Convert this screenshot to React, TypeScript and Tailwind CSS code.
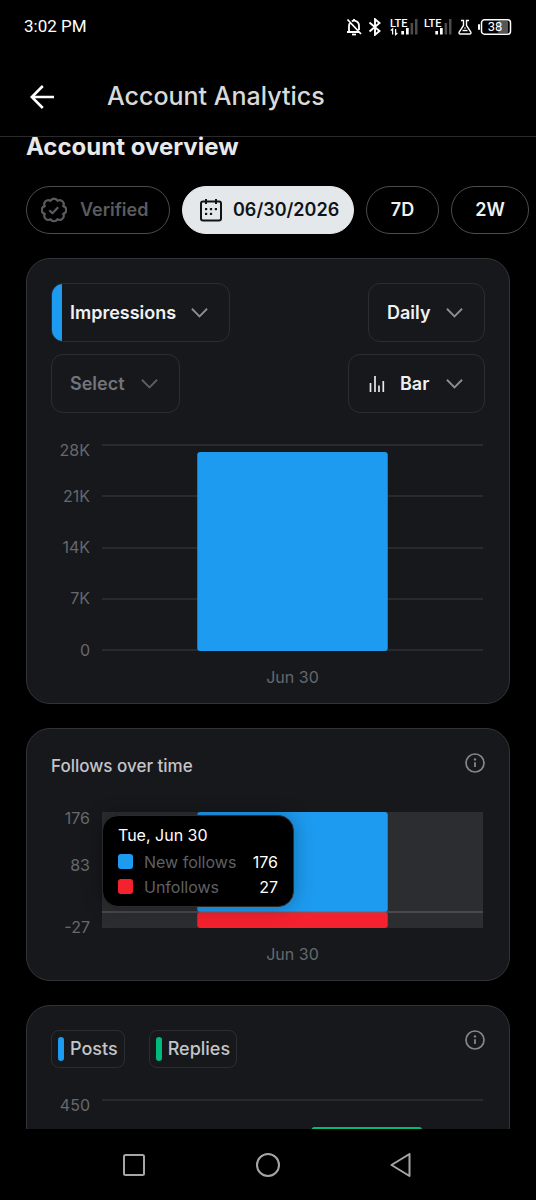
import type { ReactNode } from 'react';
import { clsx } from 'clsx';

const ChevronDown = () => (
  <svg className="pointer-events-none h-3 w-[17px] shrink-0" viewBox="0 0 18 12" fill="none" stroke="#8b8d92" strokeWidth="2">
    <path d="M1 1.5l8 8 8-8" />
  </svg>
);

const InfoIcon = () => (
  <svg className="h-5 w-5" viewBox="0 0 20 20" fill="none" stroke="#85868b" strokeWidth="1.7">
    <circle cx="10" cy="10" r="9" />
    <path d="M10 9.2v4.8" strokeWidth="1.8" />
    <circle cx="10" cy="6.4" r="1.2" fill="#85868b" stroke="none" />
  </svg>
);

const VerifiedIcon = () => (
  <svg className="h-[26px] w-[26px]" viewBox="0 0 26 26" fill="none" stroke="#5a5b5f" strokeWidth="2.2" strokeLinejoin="round">
    <path d="M13 1.6a4 4 0 0 1 3.5 2.2 4 4 0 0 1 5.7 5.3 4 4 0 0 1 0 7.8 4 4 0 0 1-5.7 5.3 4 4 0 0 1-7 0 4 4 0 0 1-5.7-5.3 4 4 0 0 1 0-7.8 4 4 0 0 1 5.7-5.3A4 4 0 0 1 13 1.6z" />
    <path d="M8.3 13.2l3.1 3.1 5.8-6" />
  </svg>
);

const CalendarIcon = () => (
  <svg className="h-6 w-6" viewBox="0 0 24 24" fill="none" stroke="#0f1419" strokeWidth="2">
    <rect x="2" y="3.5" width="20" height="19" rx="2" />
    <path d="M7 1v5M17 1v5" />
    <g fill="#0f1419" stroke="none">
      <rect x="6" y="10" width="2.2" height="2.2" />
      <rect x="10.9" y="10" width="2.2" height="2.2" />
      <rect x="15.8" y="10" width="2.2" height="2.2" />
      <rect x="6" y="14.8" width="2.2" height="2.2" />
      <rect x="10.9" y="14.8" width="2.2" height="2.2" />
    </g>
  </svg>
);

const BarsIcon = () => (
  <svg className="h-[18px] w-4 shrink-0" viewBox="0 0 16 18" stroke="#e7e9ea" strokeWidth="1.7">
    <path d="M1.5 8v9M6 1v16M10 10.5v6.5M14.3 6v11" />
  </svg>
);

const Signal = ({ data = false }: { data?: boolean }) => (
  <svg className="h-[18px] w-7" viewBox="0 0 28 18" fill="#fff">
    <text x="0" y="9" fontSize="11" fontWeight="500" fontFamily="Roboto, sans-serif">LTE</text>
    {data && <path d="M.8 12.6l1.8-1.6v5.5M5.6 11v5.5l1.8-1.6" fill="none" stroke="#fff" strokeWidth="1.3" />}
    <rect x="11.3" y="13" width="2.7" height="3.5" />
    <rect x="16" y="10" width="2.7" height="6.5" />
    <rect x="20.6" y="5" width="2.5" height="11.5" fill="#4c4c4c" />
    <rect x="25" y="1" width="2.5" height="15.5" fill="#4c4c4c" />
  </svg>
);

const StatusBar = () => (
  <div className="flex h-[54px] shrink-0 items-center justify-between px-6 text-white">
    <span className="font-[Roboto,sans-serif] text-[17px]">3:02 PM</span>
    <div className="flex items-center gap-[6px]">
      <svg className="h-[18px] w-4" viewBox="0 0 16 18" fill="none" stroke="#fff" strokeWidth="1.8">
        <path d="M3 14V8c0-1 .3-2 .8-2.8M5.8 3.2A5 5 0 0 1 13 8v4M1 14h12M1.5 1.5l13.5 14.5" />
        <path d="M8 1v2" strokeWidth="2" />
        <path d="M6 16.5h4" />
      </svg>
      <svg className="h-[18px] w-[14px]" viewBox="0 0 14 18" fill="none" stroke="#fff" strokeWidth="1.9">
        <path d="M1.5 4.5l10 8.500-4.500 3.800V1.2L11.500 5l-10 8.500" />
      </svg>
      <div className="flex gap-[6px] pl-[2px]">
        <Signal data />
        <Signal />
      </div>
      <svg className="h-[18px] w-[14px]" viewBox="0 0 14 18" fill="none" stroke="#fff" strokeWidth="1.4">
        <path d="M3 2.5h2.5v5L1.2 14c-.5 1 0 2 1 2h9.6c1 0 1.5-1 1-2L8.5 7.5v-5H11" />
        <path d="M4.5 12.5h5" />
        <circle cx="7" cy="10" r=".8" fill="#fff" stroke="none" />
      </svg>
      <svg className="h-[18px] w-[34px]" viewBox="0 0 34 18">
        <rect x="0" y="6" width="2" height="6" rx="1" fill="#fff" />
        <rect x="20" y="3" width="10" height="12" rx="1" fill="#565656" />
        <rect x="3.5" y="1.8" width="29" height="14.4" rx="3" fill="none" stroke="#fff" strokeWidth="1.5" />
        <text x="17" y="13.4" textAnchor="middle" fontSize="13" fontFamily="Roboto, sans-serif" fill="#fff">38</text>
      </svg>
    </div>
  </div>
);

const Card = ({ children }: { children: ReactNode }) => (
  <section className="rounded-3xl border border-[#323337] bg-[#17181c] px-6 pt-6 pb-3">{children}</section>
);

const Chip = ({ children, active, disabled, className }: { children: ReactNode; active?: boolean; disabled?: boolean; className?: string }) => (
  <button
    type="button"
    disabled={disabled}
    className={clsx(
      'flex h-12 shrink-0 items-center rounded-full border text-lg font-semibold',
      active ? 'border-[#e5e8ea] bg-[#e5e8ea] text-[#0f1419]' : 'border-[#4c4c4e] bg-black',
      disabled ? 'text-[#5a5b5f]' : !active && 'text-[#f0f1f2]',
      className
    )}
  >
    {children}
  </button>
);

type DropdownProps = { label: string; value: string; accent?: boolean; muted?: boolean; icon?: ReactNode; className: string };

const Dropdown = ({ label, value, accent, muted, icon, className }: DropdownProps) => (
  <label
    className={clsx(
      'flex h-[59px] items-center overflow-hidden rounded-xl border border-[#2c2d31] pr-[21px] text-lg font-semibold',
      muted ? 'text-[#72747a]' : 'text-[#f0f1f2]',
      className
    )}
  >
    {accent && <span className="mr-2 h-full w-[10px] shrink-0 bg-[#1d9bf0]" />}
    {icon}
    <select aria-label={label} defaultValue={value} className="min-w-0 flex-1 appearance-none bg-transparent outline-none">
      <option>{value}</option>
    </select>
    <span className={clsx('flex', muted && 'opacity-60')}>
      <ChevronDown />
    </span>
  </label>
);

type Tick = { label: string; y: number };

// Axis labels sit in their own fixed column, the plot takes the remaining width
const Axis = ({ ticks }: { ticks: Tick[] }) => (
  <svg className="h-full w-[39px] shrink-0 overflow-visible text-base" fill="#66686d">
    {ticks.map((t) => (
      <text key={t.label} x="39" y={t.y + 6} textAnchor="end">{t.label}</text>
    ))}
  </svg>
);

const impressionTicks: Tick[] = [
  { label: '28K', y: 6 },
  { label: '21K', y: 52 },
  { label: '14K', y: 103 },
  { label: '7K', y: 154 },
  { label: '0', y: 206 },
];

const followTicks: Tick[] = [
  { label: '176', y: 6 },
  { label: '83', y: 53 },
  { label: '-27', y: 115 },
];

const tooltipRows = [
  { label: 'New follows', value: 176, color: 'bg-[#1d9bf0]' },
  { label: 'Unfollows', value: 27, color: 'bg-[#f4212e]' },
];

const Legend = ({ label, color }: { label: string; color: string }) => (
  <button type="button" aria-pressed="true" className="flex h-[38px] items-center gap-[6px] rounded-lg border border-[#2c2d31] px-[6px] text-lg font-medium text-[#c4c5c8]">
    <span className={clsx('h-6 w-[6px] rounded-sm', color)} />
    {label}
  </button>
);

export default function App() {
  return (
    <div className="flex h-screen flex-col overflow-hidden bg-black font-[Inter,sans-serif]">
      <StatusBar />

      <header className="flex h-[83px] shrink-0 items-center border-b border-[#2a2a2c] pt-[3px] pl-[30px]">
        <button type="button" aria-label="Back" className="mr-[53px]">
          <svg className="h-6 w-6" viewBox="0 0 24 24" fill="none" stroke="#fff" strokeWidth="2.6">
            <path d="M24 12H2M12.8 1L1.8 12l11 11" />
          </svg>
        </button>
        <h1 className="text-[25px] font-medium text-[#d9d9d9]">Account Analytics</h1>
      </header>

      <main className="min-h-0 flex-1">
        <h2 className="px-[26px] text-2xl leading-5 font-bold text-[#e7e9ea]">Account overview</h2>

        <div className="mt-[29px] flex gap-3 overflow-hidden pl-[26px]">
          <Chip disabled className="w-[144px] gap-[13px] pl-[14px]">
            <VerifiedIcon />
            Verified
          </Chip>
          <Chip active className="w-[172px] gap-[10px] pl-4">
            <CalendarIcon />
            06/30/2026
          </Chip>
          <Chip className="w-[73px] justify-center">7D</Chip>
          <Chip className="w-[78px] justify-center">2W</Chip>
        </div>

        <div className="mt-6 flex flex-col gap-6 px-[26px]">
          <Card>
            <div className="flex flex-col gap-3">
              <div className="flex justify-between">
                <Dropdown label="Primary metric" value="Impressions" accent className="w-[179px]" />
                <Dropdown label="Interval" value="Daily" className="w-[117px] pl-[18px]" />
              </div>
              <div className="flex justify-between">
                <Dropdown label="Secondary metric" value="Select" muted className="w-[129px] pl-[18px]" />
                <Dropdown label="Chart type" value="Bar" icon={<span className="mr-[15px]"><BarsIcon /></span>} className="w-[137px] pl-5" />
              </div>
            </div>

            <div className="mt-[31px] flex h-[247px] gap-3 pr-[2px]">
              <Axis ticks={impressionTicks} />
              <svg className="h-full min-w-0 flex-1 text-base">
                {[1, 52, 104, 155, 206].map((y) => (
                  <line key={y} x1="0" x2="100%" y1={y} y2={y} stroke="#292a2e" strokeWidth="2" />
                ))}
                <rect x="25%" y="8" width="50%" height="199" rx="3" fill="#1d9bf0" />
                <text x="50%" y="239" textAnchor="middle" fill="#66686d">Jun 30</text>
              </svg>
            </div>
          </Card>

          <Card>
            <div className="flex h-7 items-start justify-between">
              <h3 className="pt-[1px] text-[17px] font-medium text-[#c4c5c8]">Follows over time</h3>
              <button type="button" aria-label="About follows over time">
                <InfoIcon />
              </button>
            </div>
            <div className="mt-[31px] flex h-[156px] gap-3 pr-[2px]">
              <Axis ticks={followTicks} />
              <div className="relative min-w-0 flex-1">
                <svg className="h-full w-full text-base">
                  <rect width="100%" height="116" fill="#2c2d30" />
                  <rect x="25%" y="0" width="50%" height="100" rx="3" fill="#1d9bf0" />
                  <rect x="25%" y="100" width="50%" height="16" rx="3" fill="#f4212e" />
                  <line x1="0" x2="100%" y1="100" y2="100" stroke="#66676b" />
                  <text x="50%" y="148" textAnchor="middle" fill="#66686d">Jun 30</text>
                </svg>
                <div className="absolute top-[3px] left-0 w-[192px] rounded-2xl border border-[#2a2b2e] bg-black px-[15px] py-[7px] text-base shadow-[0_0_20px_rgba(0,0,0,0.3)]">
                  <p className="pb-[2px] text-white">Tue, Jun 30</p>
                  <table className="w-full">
                    <tbody>
                      {tooltipRows.map((row) => (
                        <tr key={row.label} className="h-[25px]">
                          <td className="w-[26px]">
                            <span className={clsx('block size-[15px] rounded-[3px]', row.color)} />
                          </td>
                          <td className="text-[#5f6165]">{row.label}</td>
                          <td className="text-right text-white">{row.value}</td>
                        </tr>
                      ))}
                    </tbody>
                  </table>
                </div>
              </div>
            </div>
          </Card>

          <Card>
            <div className="flex items-start">
              <div className="flex flex-1 gap-6">
                <Legend label="Posts" color="bg-[#1d9bf0]" />
                <Legend label="Replies" color="bg-[#00ba7c]" />
              </div>
              <button type="button" aria-label="About posts and replies">
                <InfoIcon />
              </button>
            </div>
            <div className="mt-[31px] flex h-[247px] gap-3 pr-[2px]">
              <Axis ticks={[{ label: '450', y: 6 }]} />
              <svg className="h-full min-w-0 flex-1">
                <line x1="0" x2="100%" y1="1" y2="1" stroke="#292a2e" strokeWidth="2" />
                <rect x="55%" y="28" width="29%" height="179" rx="3" fill="#00ba7c" />
              </svg>
            </div>
          </Card>
        </div>
      </main>

      <nav className="z-10 flex h-[71px] shrink-0 items-center justify-center gap-[110px] bg-black">
        <button type="button" aria-label="Recent apps">
          <svg className="h-6 w-6" viewBox="0 0 24 24" fill="none" stroke="#a6a6a6" strokeWidth="2">
            <rect x="2" y="2" width="20" height="20" rx="1.5" />
          </svg>
        </button>
        <button type="button" aria-label="Home">
          <svg className="h-6 w-6" viewBox="0 0 24 24" fill="none" stroke="#a6a6a6" strokeWidth="2">
            <circle cx="12" cy="12" r="11" />
          </svg>
        </button>
        <button type="button" aria-label="Back">
          <svg className="h-6 w-6" viewBox="0 0 24 24" fill="none" stroke="#a6a6a6" strokeWidth="2" strokeLinejoin="round">
            <path d="M19.5 1v22L1.5 12z" />
          </svg>
        </button>
      </nav>
    </div>
  );
}
